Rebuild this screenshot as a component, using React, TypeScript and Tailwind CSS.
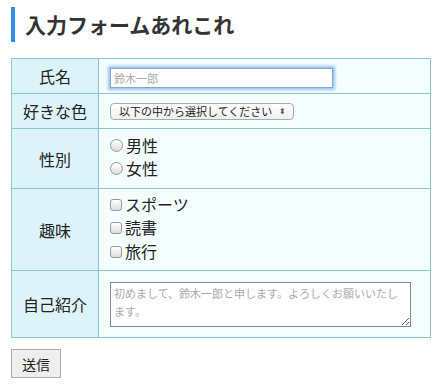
export default function App() {
  return (
    <div
      className="w-[443px] h-[387px] bg-white px-[11px] pt-[7px] text-[#222]"
      style={{ fontFamily: '"Noto Sans CJK JP", "Noto Sans", sans-serif' }}
    >
      <h1 className="border-l-4 border-[#2f8ff0] h-[35px] pl-[10px] flex items-center text-[21px] font-bold text-[#333] leading-none">
        入力フォームあれこれ
      </h1>

      <table className="mt-[16px] w-[420px] border-collapse text-[16px]">
        <tbody>
          <Row label="氏名" h="h-[35px]">
            <input
              type="text"
              placeholder="鈴木一郎"
              className="w-[223px] h-[20px] px-[3px] text-[11px] bg-white border border-[#7fa7d8] outline-none shadow-[0_0_3px_2px_rgba(90,150,230,0.6)] placeholder:text-[#aaa]"
            />
          </Row>
          <Row label="好きな色" h="h-[35px]">
            <div className="w-[184px] h-[17px] rounded-[4px] border border-[#aaa] bg-gradient-to-b from-white to-[#f0f0f0] flex items-center justify-between pl-[8px] pr-[7px] text-[11px] leading-none whitespace-nowrap text-[#222]">
              <span>以下の中から選択してください</span>
              <span className="text-[8px] text-[#555]">⬍</span>
            </div>
          </Row>
          <Row label="性別" h="h-[60px]">
            <div className="flex flex-col leading-[23px] -mt-[3px]">
              <Choice round label="男性" />
              <Choice round label="女性" />
            </div>
          </Row>
          <Row label="趣味" h="h-[82px]">
            <div className="flex flex-col leading-[23.5px] -mt-[3px]">
              <Choice label="スポーツ" />
              <Choice label="読書" />
              <Choice label="旅行" />
            </div>
          </Row>
          <Row label="自己紹介" h="h-[67px]">
            <textarea
              placeholder="初めまして、鈴木一郎と申します。よろしくお願いいたします。"
              className="block w-[301px] h-[45px] border border-[#888] bg-white px-[3px] py-[1px] text-[11px] leading-[18px] placeholder:text-[#aaa] resize"
            />
          </Row>
        </tbody>
      </table>

      <button className="mt-[11px] w-[50px] h-[29px] bg-[#eee] border border-[#aaa] text-[14px] text-[#222] leading-none">
        送信
      </button>
    </div>
  );
}

function Row({ label, h, children }: { label: string; h: string; children: React.ReactNode }) {
  return (
    <tr className={h}>
      <th className="w-[87px] p-0 border border-[#86c6d5] bg-[#ddf3fa] font-normal text-center align-middle">
        {label}
      </th>
      <td className="p-0 pl-[11px] border border-[#86c6d5] bg-[#f5feff] align-middle">{children}</td>
    </tr>
  );
}

function Choice({ label, round }: { label: string; round?: boolean }) {
  return (
    <label className="flex items-center gap-[3px]">
      <span
        className={
          round
            ? "w-[13px] h-[13px] rounded-full border border-[#999] bg-gradient-to-b from-[#fff] to-[#ddd]"
            : "w-[12px] h-[12px] rounded-[3px] border border-[#999] bg-gradient-to-b from-[#fff] to-[#ddd]"
        }
      />
      <span>{label}</span>
    </label>
  );
}
